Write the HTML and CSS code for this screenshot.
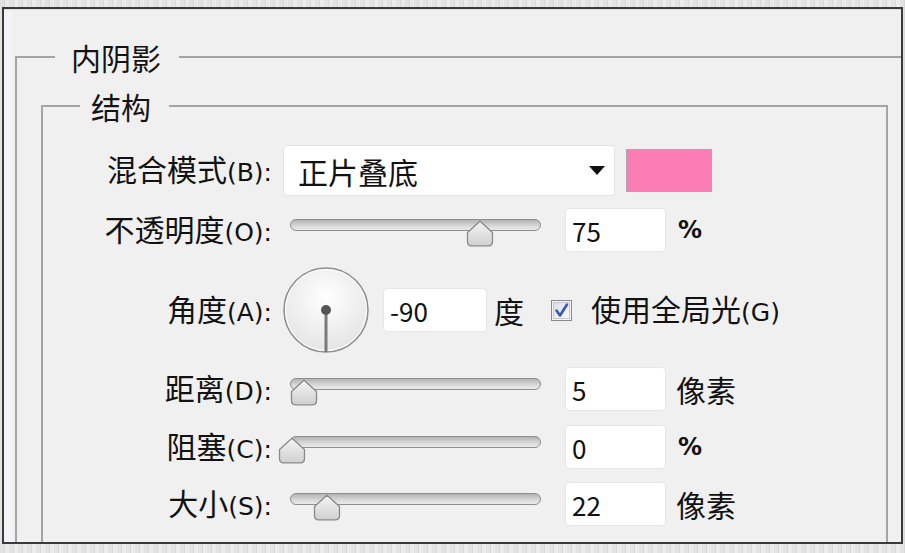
FILE: index.html
```html
<!DOCTYPE html>
<html lang="zh-CN">
<head>
<meta charset="utf-8">
<title>内阴影</title>
<link rel="stylesheet" href="styles.css">
</head>
<body>
<div class="page">
  <div class="window">
    <fieldset class="group outer">
      <legend class="legend outer-legend">内阴影</legend>
      <fieldset class="group inner">
        <legend class="legend inner-legend">结构</legend>
        <div class="rows">
          <div class="row row-blend">
            <span class="label">混合模式<span class="key">(B):</span></span>
            <div class="select">
              <span class="select-text">正片叠底</span>
              <span class="caret"></span>
            </div>
            <div class="swatch"></div>
          </div>

          <div class="row row-opacity">
            <span class="label">不透明度<span class="key">(O):</span></span>
            <div class="slider">
              <div class="track"></div>
              <svg class="thumb" style="left:176px" width="28" height="27" viewBox="0 0 28 27"><use href="#thumb-shape"/></svg>
            </div>
            <div class="field">75</div>
            <span class="unit unit-pct">%</span>
          </div>

          <div class="row row-angle">
            <span class="label">角度<span class="key">(A):</span></span>
            <svg class="dial" width="88" height="88" viewBox="0 0 88 88">
              <defs>
                <radialGradient id="dialfill" cx="50%" cy="35%" r="70%">
                  <stop offset="0" stop-color="#ffffff"/>
                  <stop offset="1" stop-color="#e2e2e2"/>
                </radialGradient>
              </defs>
              <circle cx="44" cy="44" r="42" fill="url(#dialfill)" stroke="#8e8e8e" stroke-width="1.5"/>
              <circle cx="44" cy="44" r="40.5" fill="none" stroke="#ffffff" stroke-width="1"/>
              <line x1="44" y1="44" x2="44" y2="86" stroke="#7a7a7a" stroke-width="3"/>
              <circle cx="44" cy="44" r="5" fill="#555555"/>
            </svg>
            <div class="field field-angle">-90</div>
            <span class="unit unit-deg">度</span>
            <svg class="checkbox" width="21" height="21" viewBox="0 0 21 21">
              <defs>
                <linearGradient id="cbfill" x1="0" y1="0" x2="1" y2="1">
                  <stop offset="0" stop-color="#d9dde6"/>
                  <stop offset="1" stop-color="#fbfbfd"/>
                </linearGradient>
              </defs>
              <rect x="0.5" y="0.5" width="20" height="20" fill="#f4f4f4" stroke="#8a8a8a"/>
              <rect x="2.5" y="2.5" width="16" height="16" fill="url(#cbfill)" stroke="#c4c8d2"/>
              <path d="M5.5 10.5 L9 15.5 L16 4.5" fill="none" stroke="#3a55b5" stroke-width="2.6" stroke-linecap="round" stroke-linejoin="round"/>
            </svg>
            <span class="check-label">使用全局光<span class="key">(G)</span></span>
          </div>

          <div class="row row-distance">
            <span class="label">距离<span class="key">(D):</span></span>
            <div class="slider">
              <div class="track"></div>
              <svg class="thumb" style="left:0px" width="28" height="27" viewBox="0 0 28 27"><use href="#thumb-shape"/></svg>
            </div>
            <div class="field">5</div>
            <span class="unit unit-px">像素</span>
          </div>

          <div class="row row-choke">
            <span class="label">阻塞<span class="key">(C):</span></span>
            <div class="slider">
              <div class="track"></div>
              <svg class="thumb" style="left:-12px" width="28" height="27" viewBox="0 0 28 27"><use href="#thumb-shape"/></svg>
            </div>
            <div class="field">0</div>
            <span class="unit unit-pct">%</span>
          </div>

          <div class="row row-size">
            <span class="label">大小<span class="key">(S):</span></span>
            <div class="slider">
              <div class="track"></div>
              <svg class="thumb" style="left:23px" width="28" height="27" viewBox="0 0 28 27"><use href="#thumb-shape"/></svg>
            </div>
            <div class="field">22</div>
            <span class="unit unit-px">像素</span>
          </div>
        </div>
      </fieldset>
    </fieldset>
  </div>
</div>

<svg class="defs" width="0" height="0" aria-hidden="true">
  <defs>
    <linearGradient id="thumbfill" x1="0" y1="0" x2="0" y2="1">
      <stop offset="0" stop-color="#f6f6f6"/>
      <stop offset="1" stop-color="#cfcfcf"/>
    </linearGradient>
    <path id="thumb-shape" d="M14 1.2 L26.5 12.5 L26.5 21.5 Q26.5 25.8 22.2 25.8 L5.8 25.8 Q1.5 25.8 1.5 21.5 L1.5 12.5 Z" fill="url(#thumbfill)" stroke="#8a8a8a" stroke-width="1.3" stroke-linejoin="round"/>
  </defs>
</svg>
</body>
</html>
```

FILE: styles.css
```css
* {
  box-sizing: border-box;
}

html,
body {
  margin: 0;
  padding: 0;
}

body {
  width: 905px;
  height: 553px;
  overflow: hidden;
  font-family: "Noto Sans CJK SC", "Noto Sans", sans-serif;
  color: #121212;
  background: repeating-linear-gradient(90deg, #e3e3e3 0 4px, #d8d8d8 4px 5px, #ebebeb 5px 9px);
}

.defs {
  position: absolute;
  width: 0;
  height: 0;
}

.page {
  height: 553px;
  padding: 7px 2px 9px 2px;
  display: flex;
}

.window {
  flex: 1;
  background: #f0f0f0;
  border: 2px solid #3a3a3a;
  box-shadow: inset 0 1px 0 #d6e1ee, inset 8px 0 0 #f4f4f6;
  padding: 30px 0 0 11px;
  overflow: hidden;
}

.group {
  margin: 0;
  padding: 0;
  min-width: 0;
  border: 2px solid #a4a4a4;
  border-right: none;
  border-bottom: none;
}

.outer {
  height: 600px;
}

.legend {
  font-size: 30px;
  line-height: 36px;
  color: #141414;
}

.outer-legend {
  margin-left: 38px;
  padding: 0 18px 0 16px;
}

.inner {
  margin: 13px 0 0 24px;
  width: 847px;
  height: 600px;
  border-right: 2px solid #a4a4a4;
}

.inner-legend {
  margin-left: 37px;
  padding: 0 18px 0 11px;
}

.rows {
  padding-top: 21px;
  display: flex;
  flex-direction: column;
}

.row {
  display: flex;
  align-items: center;
}

.label {
  flex: none;
  width: 229px;
  text-align: right;
  font-size: 30px;
  line-height: 36px;
  white-space: nowrap;
}

.key {
  font-family: "DejaVu Sans", "Noto Sans CJK SC", sans-serif;
  font-size: 25px;
}

.row-blend {
  height: 51px;
}

.row-opacity {
  margin-top: 12px;
  height: 44px;
}

.row-angle {
  margin-top: 15px;
  height: 86px;
}

.row-distance {
  margin-top: 14px;
  height: 44px;
}

.row-choke {
  margin-top: 14px;
  height: 44px;
}

.row-size {
  margin-top: 13px;
  height: 44px;
}

.select {
  flex: none;
  margin-left: 11px;
  width: 332px;
  height: 51px;
  background: #ffffff;
  border: 1px solid #e3e3e3;
  border-radius: 4px;
  display: flex;
  align-items: center;
  justify-content: space-between;
  padding: 0 9px 0 14px;
}

.select-text {
  font-size: 30px;
  line-height: 36px;
}

.caret {
  width: 0;
  height: 0;
  border-left: 8px solid transparent;
  border-right: 8px solid transparent;
  border-top: 9px solid #111111;
}

.swatch {
  flex: none;
  margin-left: 11px;
  width: 86px;
  height: 43px;
  background: #fb7db6;
  border: 1px solid #a9a9a9;
}

.slider {
  flex: none;
  position: relative;
  margin-left: 18px;
  width: 251px;
  height: 44px;
  padding-top: 11px;
}

.track {
  height: 12px;
  border-radius: 6px;
  border: 1px solid #8e8e8e;
  background: linear-gradient(#b3b3b3, #d6d6d6 55%, #ebebeb);
}

.thumb {
  position: absolute;
  top: 12px;
}

.field {
  flex: none;
  margin-left: 24px;
  width: 101px;
  height: 44px;
  background: #ffffff;
  border: 1px solid #e6e6e6;
  border-radius: 4px;
  padding-left: 6px;
  display: flex;
  align-items: center;
  font-size: 26px;
  color: #111111;
}

.unit {
  flex: none;
  font-size: 30px;
  line-height: 36px;
}

.unit-pct {
  margin-left: 12px;
  font-family: "DejaVu Sans", sans-serif;
  font-size: 24px;
  font-weight: bold;
}

.unit-px {
  margin-left: 10px;
}

.dial {
  flex: none;
  margin-left: 10px;
}

.field-angle {
  margin-left: 13px;
  width: 104px;
}

.unit-deg {
  margin-left: 7px;
}

.checkbox {
  flex: none;
  margin-left: 27px;
}

.check-label {
  flex: none;
  margin-left: 19px;
  font-size: 30px;
  line-height: 36px;
}
```
